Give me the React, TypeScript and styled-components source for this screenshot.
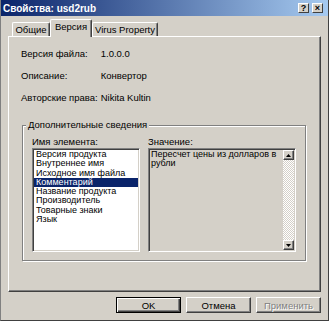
import styled, { createGlobalStyle } from "styled-components"

const Global = createGlobalStyle`
  body {
    margin: 0;
    background: #d4d0c8;
    font-family: "Liberation Sans", Arial, sans-serif;
    font-size: 9.5px;
    color: #000;
  }
`

const Window = styled.div`
  width: 329px;
  height: 321px;
  box-sizing: border-box;
  background: #d4d0c8;
  border: 1px solid;
  border-top: none;
  border-color: #d4d0c8 #404040 #404040 #808080;
  display: flex;
  flex-direction: column;
`
const TitleBar = styled.div`
  height: 16px;
  display: flex;
  align-items: center;
  padding: 0 5px 0 2px;
  background: linear-gradient(to right, #0a246a, #a6caf0);
  color: #fff;
  font-weight: bold;
  font-size: 10px;
`
const TitleText = styled.span`
  flex: 1;
`
const TitleButtons = styled.div`
  display: flex;
  gap: 3px;
`
const TitleButton = styled.div`
  width: 11px;
  height: 10px;
  box-sizing: border-box;
  background: #d4d0c8;
  border: 1px solid;
  border-color: #fff #404040 #404040 #fff;
  color: #000;
  font-size: 9px;
  font-weight: bold;
  line-height: 8px;
  text-align: center;
`
const Body = styled.div`
  flex: 1;
  padding: 3px 7px 0 7px;
  display: flex;
  flex-direction: column;
`
const TabStrip = styled.div`
  height: 17px;
  display: flex;
  align-items: flex-end;
  padding-left: 4px;
`
const Tab = styled.div<{ $w: number; $active?: boolean }>`
  width: ${p => p.$w}px;
  height: ${p => (p.$active ? 18 : 14)}px;
  margin-bottom: ${p => (p.$active ? -1 : 0)}px;
  position: relative;
  z-index: ${p => (p.$active ? 1 : 0)};
  box-sizing: border-box;
  background: #d4d0c8;
  border-top: 1px solid #fff;
  border-left: 1px solid #fff;
  border-right: 1px solid #404040;
  box-shadow: inset -1px 0 #808080;
  border-radius: 2px 2px 0 0;
  text-align: center;
  line-height: ${p => (p.$active ? 14 : 13)}px;
  white-space: nowrap;
`
const Panel = styled.div`
  height: 256px;
  box-sizing: border-box;
  border: 1px solid;
  border-color: #fff #404040 #404040 #fff;
  box-shadow: inset -1px -1px #808080;
  padding: 6px 12px 0 12px;
`
const InfoGrid = styled.div`
  display: grid;
  grid-template-columns: auto 1fr;
  column-gap: 3px;
  line-height: 22px;
  white-space: nowrap;
`
const Group = styled.div`
  margin: 16px 0 0 1px;
  width: 284px;
  height: 136px;
  box-sizing: border-box;
  border: 1px solid #808080;
  box-shadow: inset 1px 1px #fff, 1px 1px #fff;
  padding: 0 9px;
  display: flex;
  flex-direction: column;
`
const GroupTitle = styled.div`
  align-self: flex-start;
  margin: -7px 0 0 -6px;
  padding: 0 2px;
  line-height: 12px;
  background: #d4d0c8;
`
const Columns = styled.div`
  display: flex;
  gap: 8px;
  margin-top: 5px;
`
const Column = styled.div`
  display: flex;
  flex-direction: column;
`
const ColLabel = styled.div`
  line-height: 12px;
`
const Sunken = styled.div<{ $w: number; $bg: string }>`
  width: ${p => p.$w}px;
  height: 104px;
  box-sizing: border-box;
  background: ${p => p.$bg};
  border: 1px solid;
  border-color: #808080 #fff #fff #808080;
  box-shadow: inset 1px 1px #404040, inset -1px -1px #d4d0c8;
  padding: 1px;
  display: flex;
  font-size: 9px;
`
const List = styled.div`
  flex: 1;
  display: flex;
  flex-direction: column;
`
const ListItem = styled.div<{ $selected?: boolean }>`
  height: 9.3px;
  line-height: 9.3px;
  padding-left: 2px;
  white-space: nowrap;
  background: ${p => (p.$selected ? "#0a246a" : "transparent")};
  color: ${p => (p.$selected ? "#fff" : "#000")};
`
const ValueText = styled.div`
  flex: 1;
  padding-left: 1px;
  line-height: 9.3px;
`
const ScrollBar = styled.div`
  width: 11px;
  display: flex;
  flex-direction: column;
  justify-content: space-between;
  background: repeating-conic-gradient(#d4d0c8 0 25%, #fff 0 50%) 0 0 / 2px 2px;
`
const ScrollButton = styled.div`
  height: 10px;
  box-sizing: border-box;
  background: #d4d0c8;
  border: 1px solid;
  border-color: #fff #404040 #404040 #fff;
  box-shadow: inset -1px -1px #808080;
  display: flex;
  align-items: center;
  justify-content: center;
`
const Footer = styled.div`
  display: flex;
  justify-content: flex-end;
  gap: 5px;
  margin-top: 5px;
`
const Button = styled.div<{ $default?: boolean; $disabled?: boolean }>`
  width: 65px;
  height: 16px;
  box-sizing: border-box;
  background: #d4d0c8;
  border: 1px solid;
  border-color: ${p => (p.$default ? "#000" : "#fff #404040 #404040 #fff")};
  box-shadow: ${p =>
    p.$default
      ? "inset 1px 1px #fff, inset -1px -1px #404040, inset -2px -2px #808080"
      : "inset -1px -1px #808080"};
  display: flex;
  align-items: center;
  justify-content: center;
  color: ${p => (p.$disabled ? "#808080" : "#000")};
  text-shadow: ${p => (p.$disabled ? "1px 1px #fff" : "none")};
`

const Arrow = ({ up }: { up?: boolean }) => (
  <svg width="5" height="3" viewBox="0 0 5 3">
    <polygon points={up ? "2.5,0 5,3 0,3" : "0,0 5,0 2.5,3"} fill="#000" />
  </svg>
)

const items = [
  "Версия продукта",
  "Внутреннее имя",
  "Исходное имя файла",
  "Комментарий",
  "Название продукта",
  "Производитель",
  "Товарные знаки",
  "Язык",
]

const App = () => {
  return (
    <Window>
      <Global />
      <TitleBar>
        <TitleText>Свойства: usd2rub</TitleText>
        <TitleButtons>
          <TitleButton>?</TitleButton>
          <TitleButton>×</TitleButton>
        </TitleButtons>
      </TitleBar>
      <Body>
        <TabStrip>
          <Tab $w={38}>Общие</Tab>
          <Tab $w={42} $active>Версия</Tab>
          <Tab $w={66}>Virus Property</Tab>
        </TabStrip>
        <Panel>
          <InfoGrid>
            <span>Версия файла:</span>
            <span>1.0.0.0</span>
            <span>Описание:</span>
            <span>Конвертор</span>
            <span>Авторские права:</span>
            <span>Nikita Kultin</span>
          </InfoGrid>
          <Group>
            <GroupTitle>Дополнительные сведения</GroupTitle>
            <Columns>
              <Column>
                <ColLabel>Имя элемента:</ColLabel>
                <Sunken $w={108} $bg="#fff">
                  <List>
                    {items.map(it => (
                      <ListItem key={it} $selected={it === "Комментарий"}>{it}</ListItem>
                    ))}
                  </List>
                </Sunken>
              </Column>
              <Column>
                <ColLabel>Значение:</ColLabel>
                <Sunken $w={148} $bg="#d4d0c8">
                  <ValueText>Пересчет цены из долларов в рубли</ValueText>
                  <ScrollBar>
                    <ScrollButton><Arrow up /></ScrollButton>
                    <ScrollButton><Arrow /></ScrollButton>
                  </ScrollBar>
                </Sunken>
              </Column>
            </Columns>
          </Group>
        </Panel>
        <Footer>
          <Button $default>OK</Button>
          <Button>Отмена</Button>
          <Button $disabled>Применить</Button>
        </Footer>
      </Body>
    </Window>
  )
}

export default App
